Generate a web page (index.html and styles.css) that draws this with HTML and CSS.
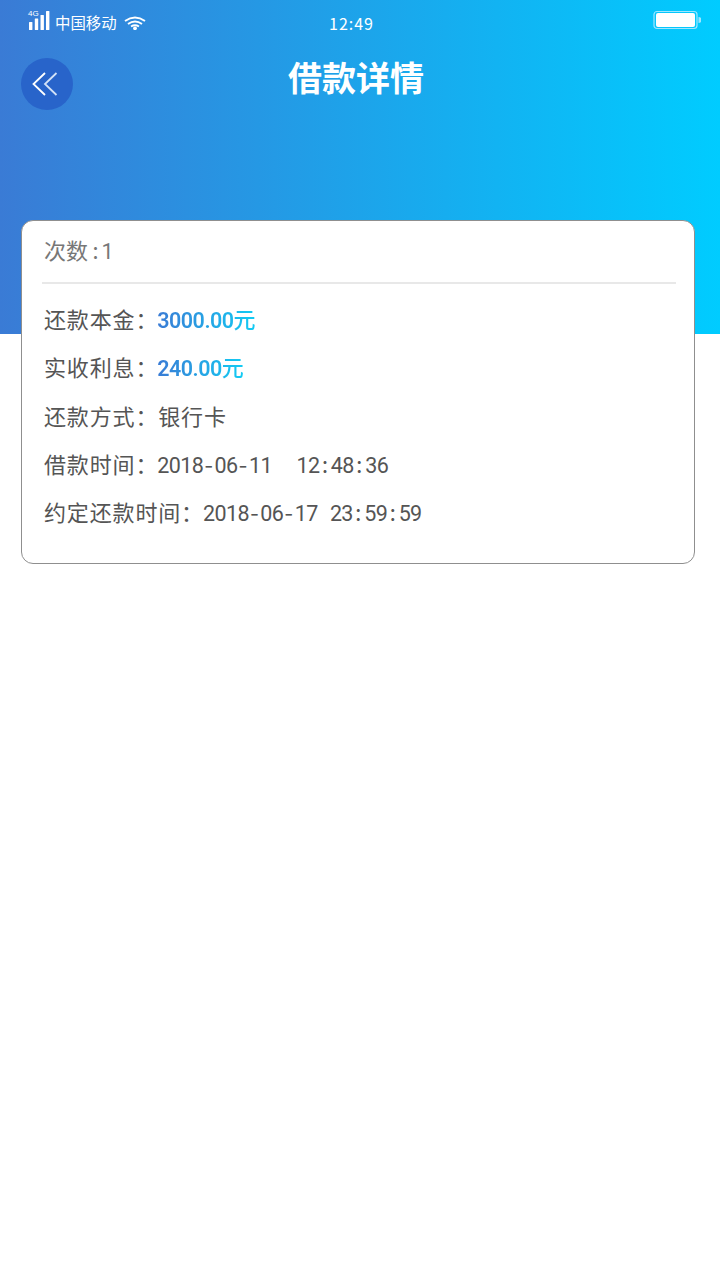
FILE: index.html
```html
<!DOCTYPE html>
<html lang="zh">
<head>
<meta charset="utf-8">
<title>借款详情</title>
<link rel="stylesheet" href="styles.css">
</head>
<body>
<header class="hero">
  <div class="status">
    <div class="status-left">
      <svg class="signal" width="22" height="20" viewBox="0 0 22 20">
        <rect x="1" y="11" width="3.400" height="8" rx="0.500" fill="#fff"/>
        <rect x="6.800" y="7.500" width="3.400" height="11.500" rx="0.500" fill="#fff"/>
        <rect x="12.500" y="4" width="3.400" height="15" rx="0.500" fill="#fff"/>
        <rect x="18" y="0" width="3.400" height="19" rx="0.500" fill="#fff"/>
      </svg>
      <span class="net">4G</span>
      <span class="carrier">中国移动</span>
      <svg class="wifi" width="22" height="14" viewBox="0 0 22 14">
        <path d="M1 5 Q11 -2 21 5 M4 8 Q11 3 18 8 M7 10.500 Q11 8 15 10.500" fill="none" stroke="#fff" stroke-width="1.900"/>
        <circle cx="11" cy="12.300" r="1.900" fill="#fff"/>
      </svg>
    </div>
    <span class="clock">12:49</span>
    <svg class="battery" width="48" height="20" viewBox="0 0 48 20">
      <rect x="1" y="1.500" width="43" height="17" rx="3" fill="none" stroke="#9fe6ff" stroke-width="1.200"/>
      <rect x="3" y="3" width="39" height="14" rx="2" fill="#fff"/>
      <path d="M45.500 7 A3 3 0 0 1 45.500 13 Z" fill="#9fe6ff"/>
    </svg>
  </div>
  <div class="nav">
    <button class="back" type="button" aria-label="返回">
      <svg width="28" height="26" viewBox="0 0 28 26">
        <path d="M14 2 L2.500 13 L14 24" fill="none" stroke="#fff" stroke-width="1.800"/>
        <path d="M25.500 2 L14 13 L25.500 24" fill="none" stroke="#d3e2f7" stroke-width="1.800"/>
      </svg>
    </button>
    <h1 class="title">借款详情</h1>
  </div>
</header>
<main class="card">
  <div class="count">次数<span class="num"><span class="mono">:</span>1</span></div>
  <div class="rows">
    <p class="row">还款本金<span class="colon">：</span><span class="amount">3000.00<span class="unit">元</span></span></p>
    <p class="row">实收利息<span class="colon">：</span><span class="amount">240.00<span class="unit">元</span></span></p>
    <p class="row">还款方式<span class="colon">：</span>银行卡</p>
    <p class="row">借款时间<span class="colon">：</span><span class="num">2018<span class="mono">-</span>06<span class="mono">-</span>11&nbsp;&nbsp;12<span class="mono">:</span>48<span class="mono">:</span>36</span></p>
    <p class="row">约定还款时间<span class="colon">：</span><span class="num">2018<span class="mono">-</span>06<span class="mono">-</span>17 23<span class="mono">:</span>59<span class="mono">:</span>59</span></p>
  </div>
</main>
</body>
</html>
```
FILE: styles.css
```css
* { box-sizing: border-box; }
html, body { margin: 0; padding: 0; background: #fff; }
body {
  width: 720px;
  height: 1280px;
  font-family: "Noto Sans CJK SC", "Noto Sans", sans-serif;
  color: #555;
  overflow: hidden;
}
.hero {
  height: 334px;
  background: linear-gradient(90deg, #3a7bd5 0%, #00ccff 100%);
  color: #fff;
}
.status {
  height: 46px;
  display: flex;
  align-items: center;
  justify-content: space-between;
  padding: 0 19px 0 28px;
  position: relative;
}
.status-left { display: flex; align-items: center; position: relative; }
.signal { margin-right: 5px; margin-top: -4px; }
.net {
  position: absolute;
  left: 0;
  top: -5px;
  font-size: 8px;
  line-height: 10px;
  font-family: "Liberation Sans", sans-serif;
}
.carrier { font-size: 15.400px; line-height: 20px; margin-top: -2px; }
.wifi { margin-left: 7px; margin-top: -1px; }
.clock {
  font-size: 16px;
  letter-spacing: 1px;
  position: absolute;
  left: 329px;
  top: 13px;
  line-height: 20px;
}
.battery { margin-top: -6px; }
.nav {
  display: flex;
  align-items: center;
  height: 76px;
  padding-left: 21px;
  position: relative;
}
.back {
  width: 52px;
  height: 52px;
  border: 0;
  padding: 0 4px 0 0;
  border-radius: 50%;
  background: #2864ca;
  display: flex;
  align-items: center;
  justify-content: center;
}
.title {
  position: absolute;
  left: 0;
  right: 8px;
  top: 6px;
  margin: 0;
  font-size: 34px;
  line-height: 50px;
  font-weight: 700;
  text-align: center;
  color: #fff;
}
.card {
  margin: -114px 25px 0 21px;
  height: 344px;
  background: #fff;
  border: 1px solid #8f8f8f;
  border-radius: 12px;
  padding: 0 18px 0 20px;
  position: relative;
}
.count {
  height: 63px;
  line-height: 56px;
  padding: 0 0 0 2px;
  font-size: 22px;
  color: #777;
  border-bottom: 2px solid #e8e8e8;
}
.rows { padding: 10px 0 0 2px; }
.row {
  margin: 0;
  height: 48.300px;
  line-height: 48px;
  font-size: 22px;
  letter-spacing: 0.850px;
  color: #555;
  white-space: nowrap;
}
.colon { font-family: "Noto Sans CJK TC", sans-serif; }
.amount {
  margin-left: -1px;
  font-family: Roboto, sans-serif;
  font-weight: 600;
  font-size: 21.500px;
  letter-spacing: -0.500px;
  background: linear-gradient(90deg, #3a7bd5, #12ccf4);
  -webkit-background-clip: text;
  background-clip: text;
  color: transparent;
}
.unit { font-family: "Noto Sans CJK SC", sans-serif; font-size: 22px; font-weight: 500; letter-spacing: 0; }
.num {
  margin-left: -1px;
  font-family: Roboto, sans-serif;
  font-size: 21.500px;
  letter-spacing: -0.600px;
  word-spacing: 7.500px;
}
.mono {
  font-family: "Noto Sans CJK SC", sans-serif;
  font-feature-settings: "hwid";
  font-size: 22px;
  letter-spacing: 0.400px;
}
.count .num { margin-left: 2px; }
```
